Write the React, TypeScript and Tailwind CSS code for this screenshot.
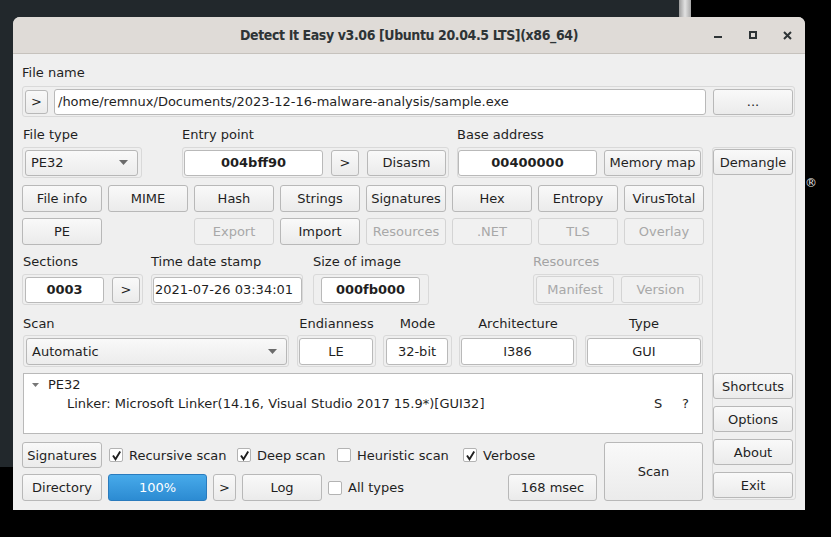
import React from "react";

const btnOn = "border-[#b8b8b8] bg-gradient-to-b from-[#f9f9f9] to-[#ebebeb] text-[#1f1f1f]";
const btnOff = "border-[#d4d4d4] bg-[#f1f1f1] text-[#a8a8a8]";

function Btn({ className = "", disabled = false, children }: { className?: string; disabled?: boolean; children: React.ReactNode }) {
  return (
    <div className={`flex shrink-0 items-center justify-center rounded-[3px] border text-[13px] leading-none ${disabled ? btnOff : btnOn} ${className}`}>
      {children}
    </div>
  );
}

function Frame({ className = "", children }: { className?: string; children: React.ReactNode }) {
  return <div className={`flex shrink-0 items-center rounded-[3px] border border-[#d9d9d9] ${className}`}>{children}</div>;
}

function Box({ className = "", bold = false, children }: { className?: string; bold?: boolean; children: React.ReactNode }) {
  return (
    <div className={`flex shrink-0 items-center rounded-[3px] border border-[#b9b9b9] bg-white text-[13px] leading-none text-[#1f1f1f] ${bold ? "font-bold" : ""} ${className}`}>
      {children}
    </div>
  );
}

function Arrow() {
  return (
    <svg width="9" height="5" viewBox="0 0 9 5">
      <polygon points="0,0 9,0 4.5,5" fill="#6b6b6b" />
    </svg>
  );
}

function Combo({ className = "", label }: { className?: string; label: string }) {
  return (
    <div className={`flex shrink-0 items-center justify-between rounded-[3px] border border-[#b7b7b7] bg-gradient-to-b from-[#f9f9f9] to-[#ececec] pl-[5px] pr-[9px] text-[13px] leading-none text-[#1f1f1f] ${className}`}>
      <span>{label}</span>
      <Arrow />
    </div>
  );
}

function Check({ checked, label, className = "" }: { checked: boolean; label: string; className?: string }) {
  return (
    <div className={`flex shrink-0 items-center text-[13px] leading-none text-[#1f1f1f] ${className}`}>
      <div className="flex h-[14px] w-[14px] items-center justify-center rounded-[2px] border border-[#b3b3b3] bg-white">
        {checked && (
          <svg width="11" height="11" viewBox="0 0 11 11">
            <path d="M2 5.5 L4.5 9.2 L9.2 1.6" fill="none" stroke="#1f1f1f" strokeWidth="1.9" />
          </svg>
        )}
      </div>
      <span className="ml-[6px]">{label}</span>
    </div>
  );
}

function Label({ className = "", children }: { className?: string; children: React.ReactNode }) {
  return <div className={`h-[16px] text-[13px] leading-[16px] text-[#1f1f1f] ${className}`}>{children}</div>;
}

export default function App() {
  return (
    <div className="relative h-[537px] w-[831px] overflow-hidden bg-black font-['DejaVu_Sans',sans-serif]">
      {/* desktop behind the window */}
      <div className="absolute left-0 top-0 h-[467px] w-[690px] bg-[#22282c]" />
      <div className="absolute left-[679px] top-0 h-[20px] w-[12px] bg-gradient-to-r from-[#9c9c9c] via-[#e2e2e2] to-[#a8a8a8]" />
      <div className="absolute left-[805px] top-[174px] text-[12px] text-[#e6e6e6]">®</div>

      {/* window */}
      <div className="absolute left-[13px] top-[17px] flex h-[493px] w-[792px] flex-col overflow-hidden rounded-t-[7px] bg-[#efefef]">
        <div className="relative flex h-[37px] shrink-0 items-center justify-center border-b border-[#c6c2bd] bg-[#dfdbd7]">
          <span className="font-['DejaVu_Sans_Condensed','DejaVu_Sans',sans-serif] text-[14px] font-bold tracking-[-0.4px] text-[#2e3436]">
            Detect It Easy v3.06 [Ubuntu 20.04.5 LTS](x86_64)
          </span>
          <div className="absolute right-0 top-0 flex h-full items-center">
            <div className="mr-[27px] mt-[4px] h-[2px] w-[8px] bg-[#2e3436]" />
            <div className="mr-[26px] h-[8px] w-[8px] border-2 border-[#2e3436]" />
            <svg className="mr-[13px]" width="9" height="9" viewBox="0 0 9 9">
              <path d="M1 1 L8 8 M8 1 L1 8" stroke="#2e3436" strokeWidth="2" />
            </svg>
          </div>
        </div>

        <div className="flex flex-col px-[9px]">
          <Label className="mt-[11px]">File name</Label>
          <Frame className="mt-[5px] h-[31px] w-[773px] pl-[2px]">
            <Btn className="h-[24px] w-[23px]">&gt;</Btn>
            <Box className="ml-[6px] h-[26px] w-[652px] pl-[3px]">/home/remnux/Documents/2023-12-16-malware-analysis/sample.exe</Box>
            <Btn className="ml-[7px] h-[26px] w-[80px]">...</Btn>
          </Frame>

          <div className="flex">
            {/* left column */}
            <div className="flex w-[681px] flex-col">
              <div className="mt-[10px] flex">
                <div className="flex w-[120px] flex-col">
                  <Label className="pl-[1px]">File type</Label>
                  <Frame className="mt-[4px] h-[31px] w-[120px] pl-[2px]">
                    <Combo className="h-[26px] w-[113px]" label="PE32" />
                  </Frame>
                </div>
                <div className="ml-[40px] flex w-[267px] flex-col">
                  <Label>Entry point</Label>
                  <Frame className="mt-[4px] h-[31px] w-[267px] pl-[1px]">
                    <Box bold className="h-[26px] w-[139px] justify-center">004bff90</Box>
                    <Btn className="ml-[8px] h-[26px] w-[28px]">&gt;</Btn>
                    <Btn className="ml-[8px] h-[26px] w-[79px]">Disasm</Btn>
                  </Frame>
                </div>
                <div className="ml-[8px] flex w-[246px] flex-col">
                  <Label>Base address</Label>
                  <Frame className="mt-[4px] h-[31px] w-[246px]">
                    <Box bold className="h-[26px] w-[139px] justify-center">00400000</Box>
                    <Btn className="ml-[7px] h-[26px] w-[97px]">Memory map</Btn>
                  </Frame>
                </div>
              </div>

              <div className="mt-[7px] grid grid-cols-[repeat(8,80px)] gap-x-[6px] gap-y-[6px]">
                <Btn className="h-[27px]">File info</Btn>
                <Btn className="h-[27px]">MIME</Btn>
                <Btn className="h-[27px]">Hash</Btn>
                <Btn className="h-[27px]">Strings</Btn>
                <Btn className="h-[27px]">Signatures</Btn>
                <Btn className="h-[27px]">Hex</Btn>
                <Btn className="h-[27px]">Entropy</Btn>
                <Btn className="h-[27px]">VirusTotal</Btn>
                <Btn className="h-[27px]">PE</Btn>
                <div />
                <Btn disabled className="h-[27px]">Export</Btn>
                <Btn className="h-[27px]">Import</Btn>
                <Btn disabled className="h-[27px]">Resources</Btn>
                <Btn disabled className="h-[27px]">.NET</Btn>
                <Btn disabled className="h-[27px]">TLS</Btn>
                <Btn disabled className="h-[27px]">Overlay</Btn>
              </div>

              <div className="mt-[9px] flex">
                <div className="flex flex-col">
                  <Label className="pl-[1px]">Sections</Label>
                  <Frame className="mt-[4px] h-[31px] w-[121px] pl-[2px]">
                    <Box bold className="h-[26px] w-[79px] justify-center">0003</Box>
                    <Btn className="ml-[8px] h-[26px] w-[28px]">&gt;</Btn>
                  </Frame>
                </div>
                <div className="ml-[8px] flex flex-col">
                  <Label>Time date stamp</Label>
                  <Frame className="mt-[4px] h-[31px] w-[152px] pl-[1px]">
                    <Box className="h-[26px] w-[149px] pl-[1px]">2021-07-26 03:34:01</Box>
                  </Frame>
                </div>
                <div className="ml-[10px] flex flex-col">
                  <Label>Size of image</Label>
                  <Frame className="mt-[4px] h-[31px] w-[116px] pl-[7px]">
                    <Box bold className="h-[26px] w-[99px] justify-center">000fb000</Box>
                  </Frame>
                </div>
                <div className="ml-[104px] flex flex-col">
                  <Label className="text-[#a3a3a3]">Resources</Label>
                  <Frame className="mt-[4px] h-[31px] w-[170px] pl-[2px]">
                    <Btn disabled className="h-[27px] w-[78px]">Manifest</Btn>
                    <Btn disabled className="ml-[7px] h-[27px] w-[79px]">Version</Btn>
                  </Frame>
                </div>
              </div>

              <div className="mt-[11px] flex">
                <div className="ml-[1px] flex flex-col">
                  <Label>Scan</Label>
                  <Frame className="mt-[3px] h-[32px] w-[266px] pl-[2px]">
                    <Combo className="h-[27px] w-[261px]" label="Automatic" />
                  </Frame>
                </div>
                <div className="ml-[8px] flex w-[79px] flex-col">
                  <Label className="text-center">Endianness</Label>
                  <Frame className="mt-[3px] h-[32px] w-[79px] pl-[1px]">
                    <Box className="h-[27px] w-[74px] justify-center">LE</Box>
                  </Frame>
                </div>
                <div className="ml-[7px] flex w-[69px] flex-col">
                  <Label className="text-center">Mode</Label>
                  <Frame className="mt-[3px] h-[32px] w-[69px] pl-[2px]">
                    <Box className="h-[27px] w-[62px] justify-center">32-bit</Box>
                  </Frame>
                </div>
                <div className="ml-[7px] flex w-[118px] flex-col">
                  <Label className="text-center">Architecture</Label>
                  <Frame className="mt-[3px] h-[32px] w-[118px] pl-[1px]">
                    <Box className="h-[27px] w-[113px] justify-center">I386</Box>
                  </Frame>
                </div>
                <div className="ml-[8px] flex w-[118px] flex-col">
                  <Label className="text-center">Type</Label>
                  <Frame className="mt-[3px] h-[32px] w-[118px] pl-[1px]">
                    <Box className="h-[27px] w-[114px] justify-center">GUI</Box>
                  </Frame>
                </div>
              </div>

              <div className="ml-[1px] mt-[6px] flex h-[61px] w-[680px] flex-col border border-[#b9b9b9] bg-white pt-[1px] text-[13px] text-[#1f1f1f]">
                <div className="flex h-[19px] items-center">
                  <div className="ml-[8px] w-[16px]">
                    <svg width="7" height="4" viewBox="0 0 7 4">
                      <polygon points="0,0 7,0 3.5,4" fill="#777777" />
                    </svg>
                  </div>
                  <span>PE32</span>
                </div>
                <div className="flex h-[19px] items-center">
                  <span className="ml-[43px] flex-1">Linker: Microsoft Linker(14.16, Visual Studio 2017 15.9*)[GUI32]</span>
                  <span className="w-[28px]">S</span>
                  <span className="w-[20px]">?</span>
                </div>
              </div>

              <div className="mt-[8px] flex">
                <div className="flex w-[575px] flex-col">
                  <div className="flex h-[26px] items-center">
                    <Btn className="h-[26px] w-[80px]">Signatures</Btn>
                    <Check className="ml-[7px] w-[128px]" checked label="Recursive scan" />
                    <Check className="w-[100px]" checked label="Deep scan" />
                    <Check className="w-[126px]" checked={false} label="Heuristic scan" />
                    <Check checked label="Verbose" />
                  </div>
                  <div className="mt-[6px] flex h-[27px] items-center">
                    <Btn className="h-[27px] w-[80px]">Directory</Btn>
                    <div className="ml-[6px] flex h-[27px] w-[99px] items-center justify-center rounded-[3px] border border-[#2a7bbd] bg-gradient-to-b from-[#47aaea] to-[#2c8bd2] text-[13px] leading-none text-white">
                      100%
                    </div>
                    <Btn className="ml-[6px] h-[27px] w-[23px]">&gt;</Btn>
                    <Btn className="ml-[6px] h-[27px] w-[80px]">Log</Btn>
                    <Check className="ml-[6px]" checked={false} label="All types" />
                    <Btn className="ml-auto h-[27px] w-[89px]">168 msec</Btn>
                  </div>
                </div>
                <Btn className="ml-[7px] h-[59px] w-[99px]">Scan</Btn>
              </div>
            </div>

            {/* right column */}
            <Frame className="ml-[9px] mt-[30px] h-[353px] w-[84px] flex-col items-start pb-[1px] pt-[1px]">
              <Btn className="h-[26px] w-[80px]">Demangle</Btn>
              <div className="flex-1" />
              <Btn className="h-[26px] w-[80px]">Shortcuts</Btn>
              <Btn className="mt-[7px] h-[26px] w-[80px]">Options</Btn>
              <Btn className="mt-[7px] h-[26px] w-[80px]">About</Btn>
              <Btn className="mt-[7px] h-[26px] w-[80px]">Exit</Btn>
            </Frame>
          </div>
        </div>
      </div>
    </div>
  );
}
